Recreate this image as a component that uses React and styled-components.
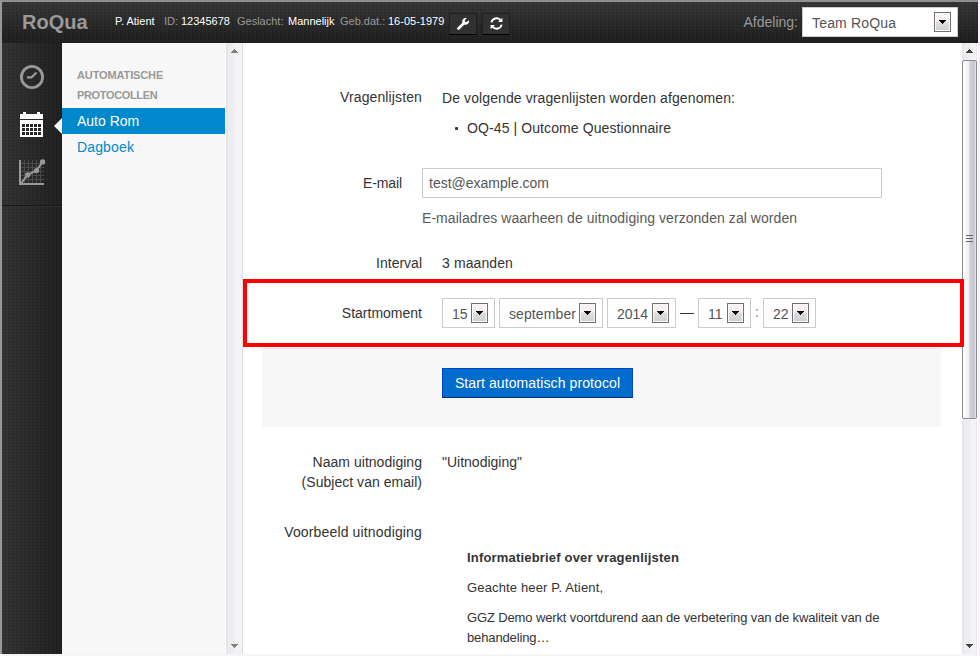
import React from 'react';
import styled, { createGlobalStyle } from 'styled-components';

const Global = createGlobalStyle`
  * { box-sizing: border-box; }
  body { margin: 0; background: #f6f4f6; overflow: hidden; font: 14px/20px "Liberation Sans", Arial, sans-serif; color: #333; }
  p, h1, h2, ul { margin: 0; padding: 0; }
`;

const Frame = styled.div`
  width: 978px; height: 654px; border-top: 2px solid #8f8f93; border-left: 2px solid #98989b;
  display: flex; flex-direction: column; overflow: hidden; background: #fff;
`;

const Header = styled.header`
  height: 41px; flex: none; display: flex; align-items: center;
  background: repeating-linear-gradient(90deg, rgba(255,255,255,.015) 0 2px, transparent 2px 4px),
    repeating-linear-gradient(0deg, rgba(0,0,0,.08) 0 1px, transparent 1px 3px),
    linear-gradient(#353535, #1e1e1e);
`;
const Brand = styled.h1`
  width: 93px; padding-left: 20px; font-size: 20px; line-height: 20px; font-weight: bold; color: #999; white-space: nowrap; padding-bottom: 1px;
`;
const Patient = styled.div`
  display: flex; width: 334px; margin-left: 20px; font-size: 11px; line-height: 20px; color: #999; white-space: nowrap; padding-bottom: 3px;
`;
const Fact = styled.span`
  width: ${p => p.$w}px; color: ${p => (p.$value ? '#fff' : '#999')};
`;
const ToolButton = styled.button`
  width: 28px; height: 22px; margin: 2px 5px 0 0; padding: 0; border: 1px solid #202020; border-bottom-color: #000;
  background: #303230; display: flex; align-items: center; justify-content: center;
`;
const Department = styled.label`
  margin-left: auto; margin-right: 20px; display: flex; align-items: center; gap: 4px; color: #999; padding-bottom: 1px;
`;

const SelectBox = styled.span`
  display: flex; align-items: center; justify-content: space-between; width: ${p => p.$w}px; height: 30px;
  border: 1px solid #ccc; background: #fff; color: #555; padding: 1px 6px 0 9px; margin-right: ${p => p.$mr || 0}px;
  white-space: nowrap; letter-spacing: ${p => p.$ls || 0}px;
`;
const Arrow = styled.span`
  width: 17px; height: 20px; flex: none; margin-top: -1px; border: 1px solid #707070; box-shadow: inset 0 0 0 1px #fafafa;
  background: linear-gradient(#f7f1f5 0 45%, #dedee0 50%, #cfcfd2); display: flex; align-items: center; justify-content: center;
`;
function Select({ w, mr, ls, children }) {
  return (
    <SelectBox $w={w} $mr={mr} $ls={ls}>
      <span>{children}</span>
      <Arrow><svg width="7" height="4" shapeRendering="crispEdges"><path d="M0 0h7v1H6v1H5v1H4v1H3V3H2V2H1V1H0z" fill="#000" /></svg></Arrow>
    </SelectBox>
  );
}

const Body = styled.div`display: flex; height: 611px;`;
const Rail = styled.nav`
  width: 60px; flex: none;
  background: repeating-linear-gradient(90deg, rgba(255,255,255,.015) 0 2px, transparent 2px 4px),
    repeating-linear-gradient(0deg, rgba(0,0,0,.08) 0 1px, transparent 1px 3px),
    linear-gradient(90deg, #313331, #1e1f1e);
`;
const RailItems = styled.div`
  height: 163px; padding-top: 10px; border-bottom: 1px solid #181818; box-shadow: 0 1px #303030;
`;
const RailItem = styled.div`
  height: 48px; display: flex; align-items: center; padding: 0 0 ${p => p.$pb || 0}px ${p => p.$pl}px; position: relative;
`;
const Pointer = styled.svg`position: absolute; right: 0; top: 17px;`;

const Sidebar = styled.aside`width: 163px; flex: none; background: #f7f7f7; padding-top: 22px;`;
const SideTitle = styled.h2`
  padding-left: 15px; font-size: 11px; line-height: 20px; font-weight: bold; color: #999; letter-spacing: -.12px;
  span { letter-spacing: -.35px; }
`;
const SideLink = styled.div`
  height: 26px; line-height: 26px; padding-left: 15px; color: ${p => (p.$active ? '#fff' : '#0088cc')};
  background: ${p => (p.$active ? '#0088cc' : 'transparent')};
  margin-top: ${p => (p.$active ? 3 : 0)}px; letter-spacing: ${p => (p.$active ? 0 : 0.14)}px;
`;

const Track = styled.div`
  width: ${p => p.$w}px; flex: none; display: flex; flex-direction: column; align-items: center;
  border-left: 2px solid #e8e4e8; border-right: 1px solid ${p => (p.$edge ? '#ddd' : '#e8e4e8')};
  background: linear-gradient(90deg, #ededef 0 6px, #f5f2f6 7px);
  margin-left: ${p => p.$ml || 0}px; padding-right: ${p => (p.$edge ? 2 : 0)}px;
`;
const TrackEnd = styled.div`height: 17px; flex: none; display: flex; align-items: center; justify-content: center; margin-top: ${p => (p.$last ? 'auto' : 0)};
  padding-bottom: ${p => (p.$last ? 0 : 1)}px; padding-right: ${p => (p.$pr || 0)}px;`;
const Thumb = styled.div`
  width: 15px; height: 359px; flex: none; margin-left: -2px; margin-right: -1px; border: 1px solid #8d8e93; border-radius: 2px;
  background: linear-gradient(90deg, #fff, #f1f0f2 45%, #d1d1d8 52%, #c6c6cf 85%, #e8e8ed);
  display: flex; align-items: center; justify-content: center; padding-bottom: 2px;
`;
const Triangle = ({ down, light }) => (
  <svg width="7" height="4" shapeRendering="crispEdges">
    <path d={down ? 'M0 0h7v1H6v1H5v1H4v1H3V3H2V2H1V1H0z' : 'M3 0h1v1h1v1h1v1h1v1H0V3h1V2h1V1h1z'} fill={light ? '#808080' : '#444'} />
  </svg>
);

const Main = styled.main`width: 719px; flex: none; padding: 44px 21px 0 19px; position: relative; color: #333;`;
const Row = styled.div`
  display: flex; align-items: ${p => (p.$center ? 'center' : 'flex-start')}; margin-bottom: ${p => p.$mb}px; height: ${p => p.$h}px; white-space: nowrap;
`;
const Label = styled.div`
  width: ${p => (p.$short ? 140 : 160)}px; margin-right: 20px; text-align: right; flex: none; letter-spacing: ${p => p.$ls || 0}px;
`;
const Text = styled.p`letter-spacing: ${p => p.$ls || 0}px; padding-top: ${p => p.$pt || 0}px;`;
const Bullets = styled.ul`padding: 10px 0 0 25px; list-style: none; letter-spacing: .1px; li { position: relative; }`;
const Bullet = styled.i`position: absolute; left: -12px; top: 9px; width: 3px; height: 3px; border-radius: 1px; background: #333;`;
const Input = styled.input`
  width: 460px; height: 30px; border: 1px solid #ccc; padding: 0 6px; font: inherit; color: #555; background: #fff; flex: none;
`;
const Help = styled.p`margin: 10px 0 25px 160px; height: 20px; color: #595959; letter-spacing: .055px;`;
const Separator = styled.span`width: ${p => p.$w}px; text-align: center; height: 22px; color: ${p => p.$color};`;
const Actions = styled.div`
  height: 79px; background: #f7f7f7; border-top: 1px solid #e5e5e5; padding: 19px 0 0 180px; margin-bottom: 25px;
`;
const Primary = styled.button`
  width: 191px; height: 30px; padding: 0; border: 1px solid #0044cc; border-bottom-color: #002a80; background: #006dcc; color: #fff; font: inherit;
  letter-spacing: .1px;
`;
const Letter = styled.article`
  margin-left: 205px; font-size: 13px; line-height: 20px; white-space: nowrap;
`;
const Paragraph = styled.p`margin-bottom: ${p => p.$mb ?? 10}px; font-weight: ${p => (p.$bold ? 'bold' : 'normal')}; letter-spacing: ${p => p.$ls || 0}px;`;
const Highlight = styled.div`
  position: absolute; left: 0; top: 236px; width: 721px; height: 68px; border: 4px solid #ff0000; z-index: 2; pointer-events: none;
`;

const dots = [0, 1, 2, 3, 4].flatMap(x => [0, 1, 2].map(y => [x, y]));

export default function App() {
  return (
    <>
      <Global />
      <Frame>
        <Header>
          <Brand>RoQua</Brand>
          <Patient>
            <Fact $value $w={49}>P. Atient</Fact><Fact $w={17}>ID:</Fact><Fact $value $w={56}>12345678</Fact>
            <Fact $w={51}>Geslacht:</Fact><Fact $value $w={52}>Mannelijk</Fact><Fact $w={48}>Geb.dat.:</Fact><Fact $value $w={60}>16-05-1979</Fact>
          </Patient>
          <ToolButton aria-label="Instellingen">
            <svg width="12" height="12" viewBox="0 0 12 12"><path d="M1.5 10.5 7 5" stroke="#fff" strokeWidth="2.7" strokeLinecap="round" /><path d="M9.8.2A3.4 3.4 0 0 0 5.5 4.7L7.3 6.5A3.4 3.4 0 0 0 11.8 2.2L9.7 4 8 3.8 7.9 2.1z" fill="#fff" /></svg>
          </ToolButton>
          <ToolButton aria-label="Vernieuwen">
            <svg width="13" height="13" viewBox="0 0 13 13" fill="none" stroke="#fff" strokeWidth="1.9"><path d="M1.4 5.4A5.2 5.2 0 0 1 10.4 3.1M11.6 7.6A5.2 5.2 0 0 1 2.6 9.9" /><path d="M12.4.7v4.4H8zM.6 12.3V7.9H5z" fill="#fff" stroke="none" /></svg>
          </ToolButton>
          <Department>Afdeling:<Select w={156} ls={0.18}>Team RoQua</Select></Department>
        </Header>
        <Body>
          <Rail>
            <RailItems>
              <RailItem $pl={18}>
                <svg width="24" height="24" viewBox="0 0 24 24" fill="none" stroke="#999"><circle cx="12" cy="12" r="10.6" strokeWidth="2.8" /><path d="M7 12.4h4.5L16.5 7.5" strokeWidth="2.2" /></svg>
              </RailItem>
              <RailItem $pl={18} $pb={1}>
                <svg width="23" height="25" shapeRendering="crispEdges"><path d="M0 2h3V0h3v2h11V0h3v2h3v5H0zM0 8h23v17H0z" fill="#fff" />{dots.map(([x, y]) => <rect key={`${x}${y}`} x={2 + x * 4} y={12 + y * 4} width="3" height="3" fill="#252625" />)}</svg>
                <Pointer width="8" height="16"><path d="M8 0v16L0 8z" fill="#f7f7f7" /></Pointer>
              </RailItem>
              <RailItem $pl={17} $pb={2}>
                <svg width="27" height="26" fill="none"><path d="M5.5 1v23M9.5 1v23M13.5 1v23M17.5 1v23M21.5 1v23M2 4.5h23M2 8.5h23M2 12.5h23M2 16.5h23M2 20.5h23" stroke="#4a4b4a" /><path d="M1 1v24h24" stroke="#999" strokeWidth="2" /><path d="M2 24.5 8.7 15.8l8.8-4.3 6-8.5" stroke="#999" strokeWidth="2" /><g fill="#999"><circle cx="8.7" cy="15.8" r="2.6" /><circle cx="17.5" cy="11.5" r="2.6" /><circle cx="23.6" cy="2.9" r="2.6" /></g></svg>
              </RailItem>
            </RailItems>
          </Rail>
          <Sidebar>
            <SideTitle>AUTOMATISCHE<br /><span>PROTOCOLLEN</span></SideTitle>
            <SideLink $active>Auto Rom</SideLink>
            <SideLink>Dagboek</SideLink>
          </Sidebar>
          <Track $w={17} $ml={1} $edge>
            <TrackEnd><Triangle light /></TrackEnd>
            <TrackEnd $last><Triangle down light /></TrackEnd>
          </Track>
          <Main>
            <Row $h={50} $mb={31}>
              <Label $ls={0.12}>Vragenlijsten</Label>
              <div><Text $ls={0.1} $pt={1}>De volgende vragenlijsten worden afgenomen:</Text><Bullets><li><Bullet />OQ-45 | Outcome Questionnaire</li></Bullets></div>
            </Row>
            <Row $h={30} $mb={0} $center><Label $short $ls={-0.1}>E-mail</Label><Input defaultValue="test@example.com" /></Row>
            <Help>E-mailadres waarheen de uitnodiging verzonden zal worden</Help>
            <Row $h={20} $mb={25}><Label>Interval</Label><Text $ls={0.1}>3 maanden</Text></Row>
            <Row $h={30} $mb={20} $center>
              <Label>Startmoment</Label>
              <Select w={53} mr={4}>15</Select><Select w={104} mr={4} ls={0.1}>september</Select><Select w={69}>2014</Select>
              <Separator $w={22} $color="#333">—</Separator><Select w={53}>11</Select>
              <Separator $w={12} $color="#777">:</Separator><Select w={53}>22</Select>
            </Row>
            <Actions><Primary>Start automatisch protocol</Primary></Actions>
            <Row $h={40} $mb={30}><Label $ls={0.03}>Naam uitnodiging<br />(Subject van email)</Label><Text>"Uitnodiging"</Text></Row>
            <Row $h={20} $mb={6}><Label $ls={0.15}>Voorbeeld uitnodiging</Label></Row>
            <Letter>
              <Paragraph $bold $ls={0.18}>Informatiebrief over vragenlijsten</Paragraph>
              <Paragraph $ls={0.15}>Geachte heer P. Atient,</Paragraph>
              <Paragraph $mb={0} $ls={-0.13}>GGZ Demo werkt voortdurend aan de verbetering van de kwaliteit van de<br />behandeling…</Paragraph>
            </Letter>
            <Highlight />
          </Main>
          <Track $w={15}>
            <TrackEnd $pr={1}><Triangle /></TrackEnd>
            <Thumb><svg width="7" height="8" shapeRendering="crispEdges"><path d="M0 .5h7M0 3.5h7M0 6.5h7" stroke="#666" /></svg></Thumb>
            <TrackEnd $last $pr={1}><Triangle down /></TrackEnd>
          </Track>
        </Body>
      </Frame>
    </>
  );
}
